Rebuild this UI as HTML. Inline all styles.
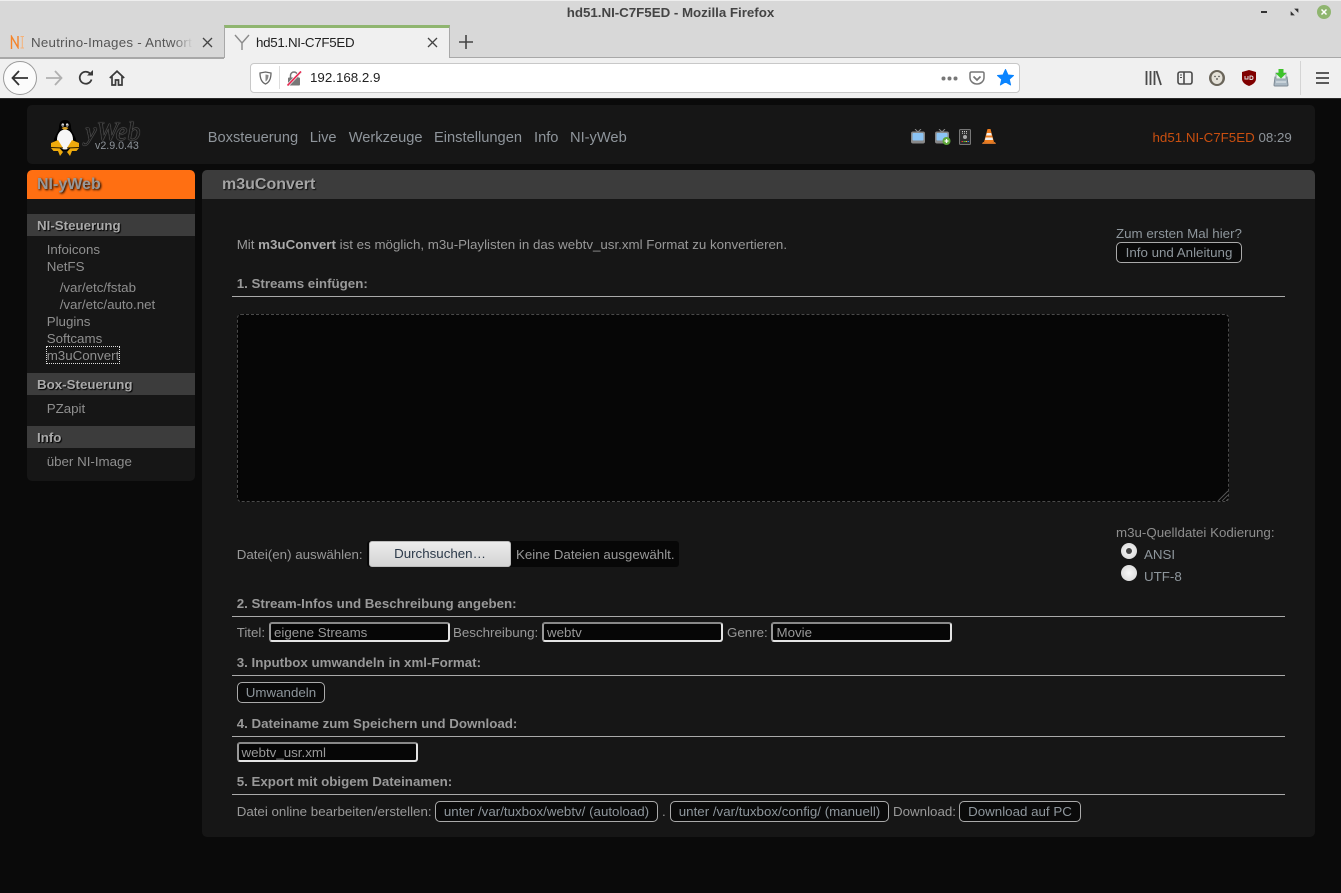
<!DOCTYPE html>
<html><head><meta charset="utf-8"><title>hd51.NI-C7F5ED - Mozilla Firefox</title>
<style>
html,body{margin:0;padding:0;width:1341px;height:893px;overflow:hidden;background:#0a0a0a;font-family:"Liberation Sans",sans-serif;}
div,span,svg{position:absolute;box-sizing:border-box;}
.t{white-space:nowrap;color:#999;font-size:13.33px;line-height:16px;}
.h{white-space:nowrap;color:#999;font-size:13.33px;line-height:16px;font-weight:bold;}
.hr{left:232px;width:1053px;height:1px;background:#aaa;}
.nav{white-space:nowrap;color:#8f959b;font-size:14.67px;line-height:18px;top:129px;}
.sb{left:27px;width:168px;height:22px;background:#3c3c3c;}
.sbt{left:37px;white-space:nowrap;color:#aaa;font-size:13.33px;line-height:16px;font-weight:bold;text-shadow:1px 1px 1px #000;}
.m{white-space:nowrap;color:#8f8f8f;font-size:13.33px;line-height:16px;}
.btn{height:21px;border:1px solid #aaa;border-radius:5px;background:#0a0a0a;color:#8e969c;font-size:13.33px;line-height:19px;text-align:center;white-space:nowrap;}
.inp{height:20px;background:#060606;border:2px solid #e4e4e4;border-top-color:#888;border-left-color:#999;border-radius:3px;color:#999;font-size:13.33px;line-height:17px;padding-left:3px;white-space:nowrap;}
</style></head><body>

<!-- title bar -->
<div style="left:0;top:0;width:1341px;height:58px;background:#d8d8d8;"></div>
<div style="left:0;top:0;width:1341px;height:1px;background:#eee;"></div>
<div style="left:0;top:5px;width:1341px;text-align:center;font-size:13.33px;font-weight:bold;line-height:16px;color:#444;letter-spacing:-.02px;">hd51.NI-C7F5ED - Mozilla Firefox</div>
<div style="left:1261px;top:11px;width:6px;height:2px;background:#333;"></div>
<svg style="left:1290px;top:8px" width="9" height="8" viewBox="0 0 9 8"><path d="M1 7V4L4 7ZM8 1V4L5 1Z" fill="#333" stroke="#333" stroke-width=".7"/></svg>
<div style="left:1317px;top:5px;width:14px;height:14px;border-radius:7px;background:#8fb56f;"></div>
<svg style="left:1317px;top:5px" width="14" height="14" viewBox="0 0 14 14"><path d="M4.500 4.500L9.500 9.500M9.500 4.500L4.500 9.500" stroke="#fff" stroke-width="1.500"/></svg>

<!-- tabs -->
<div style="left:0;top:57px;width:1341px;height:1px;background:#a8a8a8;"></div>
<svg style="left:10px;top:35px" width="15" height="14" viewBox="0 0 15 14"><path d="M1.500 14V1.500L8 12.500V1" fill="none" stroke="#f5842a" stroke-width="1.400"/><path d="M10.500 1.500H14M12.300 1.500V13M10.500 13H14" fill="none" stroke="#f5b27a" stroke-width="1"/></svg>
<div style="left:31px;top:34px;width:162px;overflow:hidden;white-space:nowrap;font-size:13.33px;line-height:17px;color:#555;letter-spacing:.25px;">Neutrino-Images - Antwort</div>
<div style="left:173px;top:34px;width:20px;height:17px;background:linear-gradient(90deg,rgba(216,216,216,0),#d8d8d8);"></div>
<svg style="left:202px;top:37px" width="11" height="11" viewBox="0 0 11 11"><path d="M1 1L10 10M10 1L1 10" stroke="#444" stroke-width="1.300"/></svg>
<div style="left:224px;top:25px;width:226px;height:34px;background:#f0f0f0;border-left:1px solid #a8a8a8;border-right:1px solid #a8a8a8;border-top:3px solid #8fb56f;"></div>
<svg style="left:234px;top:34px" width="16" height="16" viewBox="0 0 16 16"><path d="M1 1L8 9L15 1M8 9V16" fill="none" stroke="#8a8a8a" stroke-width="1.400"/></svg>
<div style="left:256px;top:34px;white-space:nowrap;font-size:13.33px;line-height:17px;color:#222;letter-spacing:-.28px;">hd51.NI-C7F5ED</div>
<svg style="left:427px;top:37px" width="11" height="11" viewBox="0 0 11 11"><path d="M1 1L10 10M10 1L1 10" stroke="#444" stroke-width="1.300"/></svg>
<svg style="left:459px;top:35px" width="14" height="14" viewBox="0 0 14 14"><path d="M7 0V14M0 7H14" stroke="#444" stroke-width="1.600"/></svg>

<!-- toolbar -->
<div style="left:0;top:58px;width:1341px;height:40px;background:#f0f0f0;"></div>
<div style="left:0;top:58px;width:224px;height:1px;background:#a8a8a8;"></div>
<div style="left:450px;top:57px;width:891px;height:1px;background:#a8a8a8;"></div>
<div style="left:0;top:98px;width:1341px;height:1px;background:#2a2a2a;"></div>
<div style="left:3px;top:61px;width:34px;height:34px;border-radius:17px;background:#fbfbfb;border:1px solid #9a9a9a;"></div>
<svg style="left:11px;top:70px" width="18" height="16" viewBox="0 0 18 16"><path d="M8 1L1.500 8L8 15M2 8H17" fill="none" stroke="#333" stroke-width="1.800"/></svg>
<svg style="left:45px;top:70px" width="18" height="16" viewBox="0 0 18 16"><path d="M10 1L16.500 8L10 15M16 8H1" fill="none" stroke="#b0b0b0" stroke-width="1.800"/></svg>
<svg style="left:78px;top:70px" width="16" height="16" viewBox="0 0 16 16"><path d="M13.500 9.500A6 6 0 1 1 12 3.500" fill="none" stroke="#3a3a3a" stroke-width="1.800"/><path d="M9 5.500H15V0Z" fill="#3a3a3a"/></svg>
<svg style="left:109px;top:70px" width="16" height="16" viewBox="0 0 16 16"><path d="M.8 8L8 1.200L15.200 8M3 6.500V15H6.500V10H9.500V15H13V6.500" fill="none" stroke="#3a3a3a" stroke-width="1.700"/></svg>

<!-- url bar -->
<div style="left:250px;top:63px;width:770px;height:30px;background:#fff;border:1px solid #c8c8c8;border-radius:4px;"></div>
<svg style="left:259px;top:71px" width="13" height="14" viewBox="0 0 13 14"><path d="M1 2L6.500 1L12 2C12 8 10 11.500 6.500 13C3 11.500 1 8 1 2Z" fill="none" stroke="#666" stroke-width="1.300"/><path d="M6.500 3.500L9.500 4C9.500 7 8.500 9.500 6.500 10.500Z" fill="#888"/></svg>
<div style="left:279px;top:66px;width:1px;height:23px;background:#ddd;"></div>
<svg style="left:287px;top:71px" width="15" height="15" viewBox="0 0 15 15"><rect x="1" y="6.500" width="12" height="8" rx="1" fill="#777"/><path d="M3.500 7V4.500A3.500 3.500 0 0 1 10.500 4.500V7" fill="none" stroke="#777" stroke-width="1.500"/><path d="M.5 14.500L14 .5" stroke="#f0f0f0" stroke-width="3"/><path d="M.5 14.500L14 .5" stroke="#e8264f" stroke-width="1.600"/></svg>
<div style="left:310px;top:70px;white-space:nowrap;font-size:13.33px;line-height:16px;color:#222;">192.168.2.9</div>
<svg style="left:941px;top:76px" width="17" height="5" viewBox="0 0 17 5"><circle cx="2.500" cy="2.500" r="2" fill="#777"/><circle cx="8.500" cy="2.500" r="2" fill="#777"/><circle cx="14.500" cy="2.500" r="2" fill="#777"/></svg>
<svg style="left:969px;top:71px" width="16" height="14" viewBox="0 0 16 14"><path d="M1 2.500Q1 1 2.500 1H13.500Q15 1 15 2.500V6.500C15 10.500 11.500 13 8 13C4.500 13 1 10.500 1 6.500Z" fill="none" stroke="#777" stroke-width="1.500"/><path d="M4.500 5.500L8 9L11.500 5.500" fill="none" stroke="#777" stroke-width="1.700"/></svg>
<svg style="left:997px;top:69px" width="17" height="17" viewBox="0 0 17 17"><path d="M8.500 .5L11 6L16.500 6.500L12.300 10.300L13.600 16L8.500 13L3.400 16L4.700 10.300L.5 6.500L6 6Z" fill="#0a84ff" stroke="#0a84ff" stroke-linejoin="round"/></svg>

<!-- right toolbar icons -->
<svg style="left:1145px;top:70px" width="17" height="16" viewBox="0 0 17 16"><path d="M1.500 1V15M5.500 1V15M9.500 1V15M11.500 1L16 15" fill="none" stroke="#4a4a4a" stroke-width="1.800"/></svg>
<svg style="left:1177px;top:71px" width="16" height="14" viewBox="0 0 16 14"><rect x="1" y="1" width="14" height="12" rx="2" fill="none" stroke="#4a4a4a" stroke-width="1.600"/><path d="M7 1V13" stroke="#4a4a4a" stroke-width="1.600"/><path d="M3 4H5M3 6.500H5" stroke="#4a4a4a"/></svg>
<svg style="left:1209px;top:70px" width="16" height="16" viewBox="0 0 16 16"><circle cx="8" cy="8" r="8" fill="#6a655a"/><ellipse cx="8" cy="8" rx="5.500" ry="6" fill="#e4e1d8"/><circle cx="6" cy="6.500" r=".7" fill="#333"/><circle cx="10" cy="6.500" r=".7" fill="#333"/><circle cx="8" cy="9" r=".9" fill="#444"/></svg>
<svg style="left:1242px;top:70px" width="14" height="16" viewBox="0 0 14 16"><path d="M0 2L7 0L14 2V9C14 12.500 10 15 7 16C4 15 0 12.500 0 9Z" fill="#800000"/><path d="M3 6V9H6V6M8 6V9.500H9.500Q11 9.500 11 7.800T9.500 6Z" fill="none" stroke="#ddd" stroke-width="1"/></svg>
<svg style="left:1273px;top:69px" width="16" height="18" viewBox="0 0 16 18"><path d="M2 8H14L15 16Q15 17 14 17H2Q1 17 1 16Z" fill="#a9b7c2" stroke="#7e8a94"/><path d="M3 4H13V10H3Z" fill="#e8eef0" stroke="#9aa"/><path d="M5.500 0H10.500V4H13.500L8 9.500L2.500 4H5.500Z" fill="#3ec32a"/><path d="M3 13H13" stroke="#e8eef0"/></svg>
<div style="left:1300px;top:61px;width:1px;height:34px;background:#d4d4d4;"></div>
<svg style="left:1316px;top:71px" width="13" height="14" viewBox="0 0 13 14"><path d="M0 2H13M0 7H13M0 12H13" stroke="#444" stroke-width="1.800"/></svg>

<!-- page: header -->
<div style="left:0;top:99px;width:1341px;height:794px;background:#0a0a0a;"></div>
<div style="left:27px;top:105px;width:1288px;height:59px;background:#161616;border-radius:5px;"></div>
<svg style="left:50px;top:120px" width="30" height="37" viewBox="0 0 30 37">
<path d="M15 0C11 0 9 3 9 7C9 11 6 14 4 19C3 23 4 28 8 31H22C26 28 27 23 26 19C24 14 21 11 21 7C21 3 19 0 15 0Z" fill="#000"/>
<ellipse cx="15" cy="19.500" rx="8" ry="10" fill="#f6f6f6"/>
<path d="M11.500 8Q15 11.500 18.500 8Q15 6 11.500 8Z" fill="#d8a020"/>
<ellipse cx="12.800" cy="5" rx="1.300" ry="1.600" fill="#e8e8e8"/><ellipse cx="17.200" cy="5" rx="1.300" ry="1.600" fill="#e8e8e8"/>
<circle cx="13" cy="5.300" r=".6" fill="#111"/><circle cx="17" cy="5.300" r=".6" fill="#111"/>
<path d="M1 23L8 20L13 28H9.500L13 32L10 36L8 31H3.500L1 28Z" fill="#eeaa0c"/>
<path d="M29 23L22 20L17 28H20.500L17 32L20 36L22 31H26.500L29 28Z" fill="#eeaa0c"/>
<path d="M1 27.500L13 28M29 27.500L17 28" stroke="#2a1c00" stroke-width="1"/>
</svg>
<div style="left:85px;top:117px;white-space:nowrap;font-family:'Liberation Serif',serif;font-style:italic;font-size:26px;line-height:30px;color:#181818;text-shadow:0 0 1px #8a8a8a,0 0 1px #8a8a8a;">yWeb</div>
<div style="left:95px;top:140px;white-space:nowrap;font-size:10.67px;line-height:13px;color:#8f959b;">v2.9.0.43</div>
<div class="nav" style="left:207.700px;">Boxsteuerung</div>
<div class="nav" style="left:309.700px;">Live</div>
<div class="nav" style="left:348.700px;">Werkzeuge</div>
<div class="nav" style="left:434px;">Einstellungen</div>
<div class="nav" style="left:534px;">Info</div>
<div class="nav" style="left:570px;">NI-yWeb</div>

<svg style="left:910px;top:129px" width="16" height="15" viewBox="0 0 16 15"><path d="M5 0L8 3L11 0" fill="none" stroke="#888"/><rect x="1" y="2.500" width="14" height="12" rx="2" fill="#888"/><rect x="2.500" y="4" width="11" height="7.500" rx="1" fill="#8cc4f4"/></svg>
<svg style="left:934px;top:129px" width="17" height="16" viewBox="0 0 17 16"><path d="M5 0L8 3L11 0" fill="none" stroke="#888"/><rect x="1" y="2.500" width="14" height="12" rx="2" fill="#888"/><rect x="2.500" y="4" width="11" height="7.500" rx="1" fill="#8cc4f4"/><circle cx="12.500" cy="12" r="4" fill="#5fa83a"/><path d="M10.500 12H14.500M12.500 10V14" stroke="#fff" stroke-width="1.300"/></svg>
<svg style="left:959px;top:129px" width="12" height="16" viewBox="0 0 12 16"><rect x=".5" y=".5" width="11" height="15" rx="1" fill="#2e2e2e" stroke="#777"/><path d="M3 2.500H9M3 4.300H9" stroke="#ccc" stroke-dasharray="1 1"/><circle cx="6" cy="8" r="2" fill="#aaa"/><path d="M2.500 12.500H4" stroke="#e33"/><path d="M4.500 12.500H6" stroke="#3c3"/><path d="M6.500 12.500H8" stroke="#ec3"/><path d="M8.500 12.500H10" stroke="#38e"/></svg>
<svg style="left:982px;top:128px" width="14" height="17" viewBox="0 0 14 17"><path d="M1 14H13L14 16H0Z" fill="#c9702a"/><path d="M5.500 1H8.500L12 14Q7 16 2 14Z" fill="#ee7d1e"/><path d="M4.800 5H9.200L9.800 7.500H4.200ZM3.500 9.500H10.500L11 12H3Z" fill="#f0f0f0"/></svg>

<div style="left:1152.500px;top:130px;white-space:nowrap;font-size:13.33px;line-height:16px;color:#c94f10;">hd51.NI-C7F5ED <span style="position:static;color:#8f959b;">08:29</span></div>

<!-- sidebar -->
<div style="left:27px;top:170px;width:168px;height:311px;background:#161616;border-radius:5px;"></div>
<div style="left:27px;top:170px;width:168px;height:29px;background:#ff6f12;border-radius:5px 5px 0 0;"></div>
<div style="left:37px;top:176px;white-space:nowrap;color:#999;font-size:16px;line-height:18px;font-weight:bold;text-shadow:1px 1px 2px #000;">NI-yWeb</div>
<div class="sb" style="top:214px;"></div><div class="sbt" style="top:218px;">NI-Steuerung</div>
<div class="m" style="left:46.700px;top:242px;">Infoicons</div>
<div class="m" style="left:46.700px;top:259px;">NetFS</div>
<div class="m" style="left:59.700px;top:280px;">/var/etc/fstab</div>
<div class="m" style="left:59.700px;top:297px;">/var/etc/auto.net</div>
<div class="m" style="left:46.700px;top:314px;">Plugins</div>
<div class="m" style="left:46.700px;top:331px;">Softcams</div>
<div class="m" style="left:46.700px;top:348px;">m3uConvert</div>
<div style="left:46px;top:346px;width:74px;height:18px;border:1px dotted #ddd;"></div>
<div class="sb" style="top:373px;"></div><div class="sbt" style="top:377px;">Box-Steuerung</div>
<div class="m" style="left:46.700px;top:401px;">PZapit</div>
<div class="sb" style="top:426px;"></div><div class="sbt" style="top:430px;">Info</div>
<div class="m" style="left:46.700px;top:454px;">über NI-Image</div>

<!-- main panel -->
<div style="left:202px;top:170px;width:1113px;height:667px;background:#161616;border-radius:5px;"></div>
<div style="left:202px;top:170px;width:1113px;height:29px;background:#3c3c3c;border-radius:5px 5px 0 0;"></div>
<div style="left:222px;top:176px;white-space:nowrap;color:#a4a4a4;font-size:16px;line-height:18px;font-weight:bold;text-shadow:1px 1px 1px #111;">m3uConvert</div>

<div class="t" style="left:236.700px;top:237px;">Mit <b style="color:#aaa">m3uConvert</b> ist es möglich, m3u-Playlisten in das webtv_usr.xml Format zu konvertieren.</div>
<div class="t" style="left:1116px;top:226px;color:#8e969c;">Zum ersten Mal hier?</div>
<div class="btn" style="left:1116px;top:242px;width:126px;">Info und Anleitung</div>

<div class="h" style="left:236.700px;top:276px;">1. Streams einfügen:</div>
<div class="hr" style="top:296px;"></div>
<div style="left:237px;top:314px;width:992px;height:188px;background:#060606;border:1px dashed #4a4a4a;border-radius:4px;"></div>
<svg style="left:1217px;top:490px" width="11" height="11" viewBox="0 0 11 11"><path d="M1 11L11 1M5 11L11 5M9 11L11 9" stroke="#555"/></svg>

<div class="t" style="left:236.700px;top:547px;">Datei(en) auswählen:</div>
<div style="left:367px;top:541px;width:312px;height:26px;background:#070707;border-radius:3px;"></div>
<div style="left:369px;top:541px;width:142px;height:26px;background:linear-gradient(#ececec,#d4d4d4);border:1px solid #bbb;border-radius:3px;color:#2c3a4a;font-size:13.33px;line-height:24px;text-align:center;">Durchsuchen…</div>
<div class="t" style="left:516px;top:547px;">Keine Dateien ausgewählt.</div>

<div class="t" style="left:1116px;top:525px;color:#8e8e8e;">m3u-Quelldatei Kodierung:</div>
<div style="left:1121px;top:543px;width:16px;height:16px;border-radius:8px;background:radial-gradient(#f8f8f8,#d4d4d4);"></div>
<div style="left:1126px;top:548px;width:6px;height:6px;border-radius:3px;background:#444;"></div>
<div class="t" style="left:1144px;top:547px;color:#8e969c;">ANSI</div>
<div style="left:1121px;top:565px;width:16px;height:16px;border-radius:8px;background:radial-gradient(#f8f8f8,#d4d4d4);"></div>
<div class="t" style="left:1144px;top:569px;color:#8e969c;">UTF-8</div>

<div class="h" style="left:236.700px;top:596px;">2. Stream-Infos und Beschreibung angeben:</div>
<div class="hr" style="top:616px;"></div>
<div class="t" style="left:236.700px;top:625px;">Titel:</div>
<div class="inp" style="left:269px;top:622px;width:181px;">eigene Streams</div>
<div class="t" style="left:453px;top:625px;">Beschreibung:</div>
<div class="inp" style="left:542px;top:622px;width:181px;">webtv</div>
<div class="t" style="left:727px;top:625px;">Genre:</div>
<div class="inp" style="left:771px;top:622px;width:181px;padding-left:3.500px;">Movie</div>

<div class="h" style="left:236.700px;top:655px;">3. Inputbox umwandeln in xml-Format:</div>
<div class="hr" style="top:675px;"></div>
<div class="btn" style="left:237px;top:682px;width:88px;">Umwandeln</div>

<div class="h" style="left:236.700px;top:716px;">4. Dateiname zum Speichern und Download:</div>
<div class="hr" style="top:736px;"></div>
<div class="inp" style="left:237px;top:742px;width:181px;padding-left:2.500px;">webtv_usr.xml</div>

<div class="h" style="left:236.700px;top:774px;">5. Export mit obigem Dateinamen:</div>
<div class="hr" style="top:794px;"></div>
<div class="t" style="left:236.700px;top:804px;">Datei online bearbeiten/erstellen:</div>
<div class="btn" style="left:435px;top:801px;width:223px;">unter /var/tuxbox/webtv/ (autoload)</div>
<div class="t" style="left:662px;top:804px;">.</div>
<div class="btn" style="left:670px;top:801px;width:219px;">unter /var/tuxbox/config/ (manuell)</div>
<div class="t" style="left:893px;top:804px;">Download:</div>
<div class="btn" style="left:959px;top:801px;width:122px;">Download auf PC</div>

</body></html>
